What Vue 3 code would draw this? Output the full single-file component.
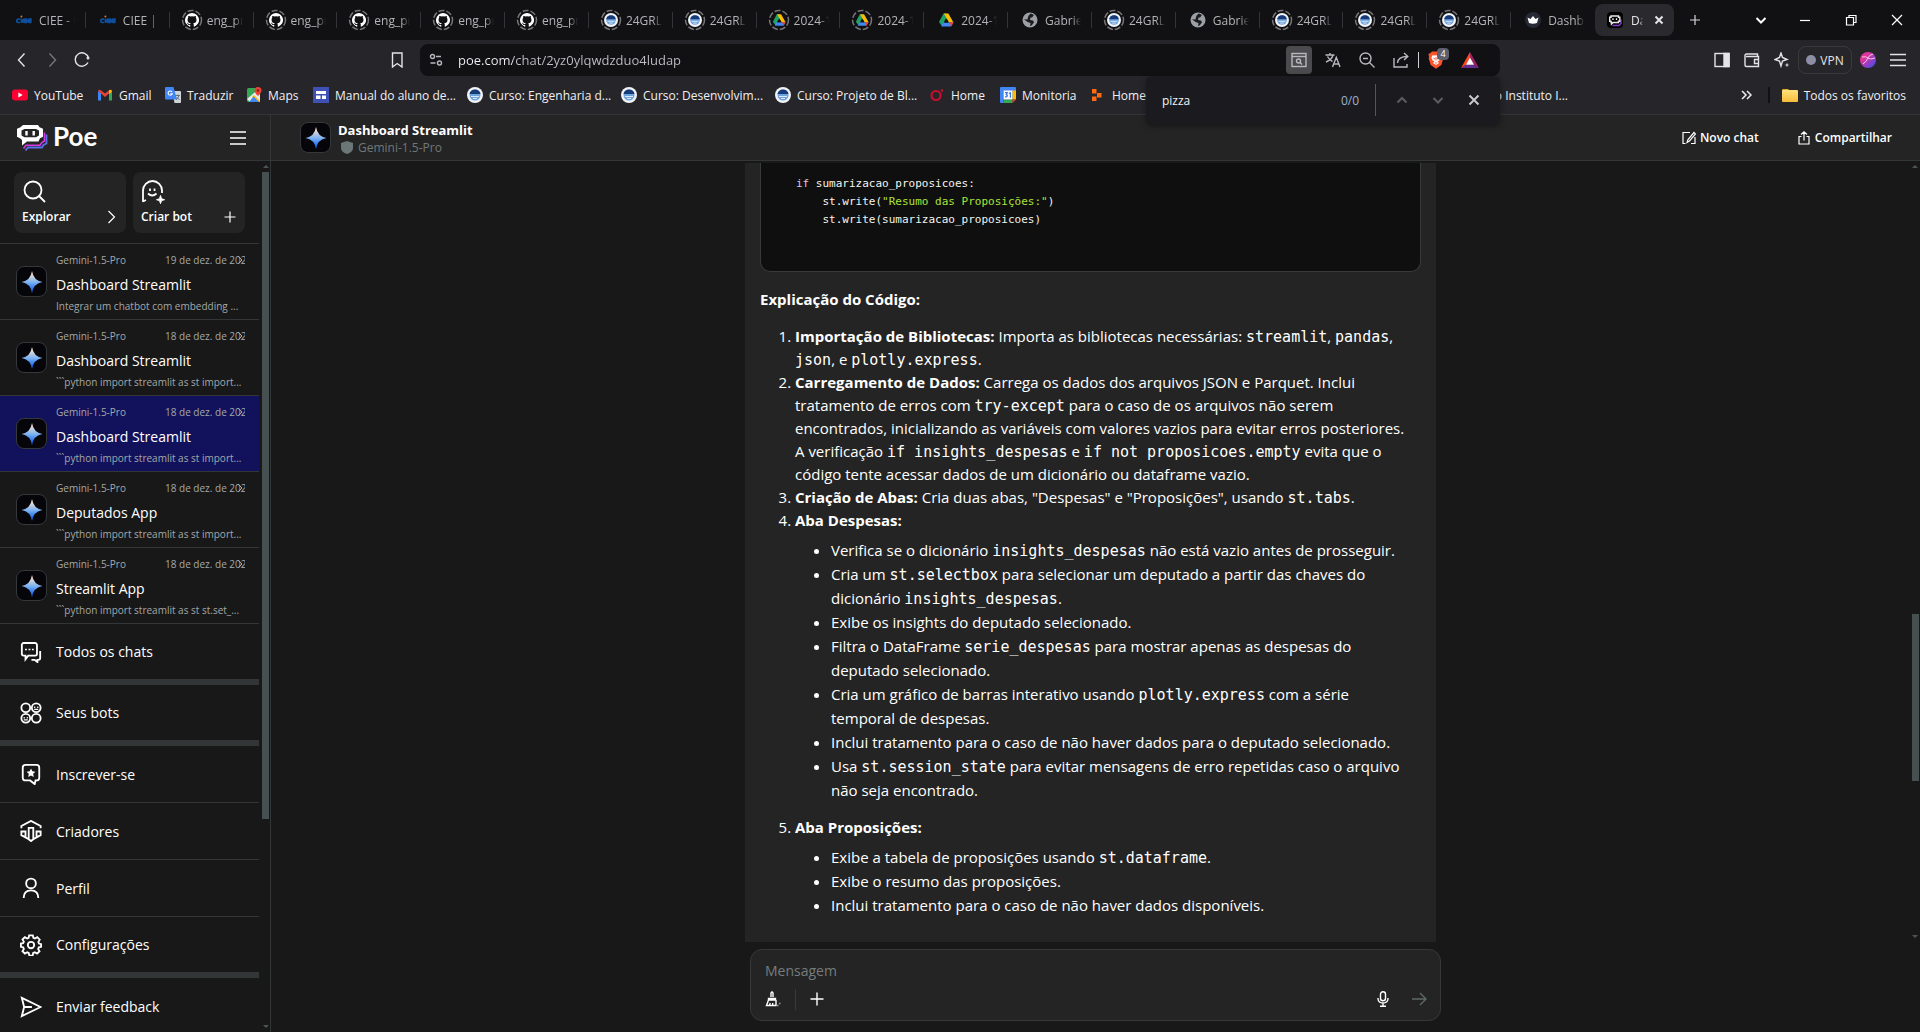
<script setup>
const tabs = [
  { icon: 'ciee', label: 'CIEE - Candidato' },
  { icon: 'ciee', label: 'CIEE | Centro' },
  { icon: 'github', label: 'eng_prompt', ring: true },
  { icon: 'github', label: 'eng_prompt', ring: true },
  { icon: 'github', label: 'eng_prompt', ring: true },
  { icon: 'github', label: 'eng_prompt', ring: true },
  { icon: 'github', label: 'eng_prompt', ring: true },
  { icon: 'infnet', label: '24GRLOED', ring: true },
  { icon: 'infnet', label: '24GRLOED', ring: true },
  { icon: 'drive', label: '2024-12-1', ring: true },
  { icon: 'drive', label: '2024-12-1', ring: true },
  { icon: 'drive', label: '2024-12-1' },
  { icon: 'globe', label: 'Gabriel Sil' },
  { icon: 'infnet', label: '24GRLOED', ring: true },
  { icon: 'globe', label: 'Gabriel Sil' },
  { icon: 'infnet', label: '24GRLOED', ring: true },
  { icon: 'infnet', label: '24GRLOED', ring: true },
  { icon: 'infnet', label: '24GRLOED', ring: true },
  { icon: 'crown', label: 'Dashboard' },
]

const bookmarks = [
  { icon: 'youtube', label: 'YouTube', width: 85 },
  { icon: 'gmail', label: 'Gmail', width: 68 },
  { icon: 'gtranslate', label: 'Traduzir', width: 81 },
  { icon: 'maps', label: 'Maps', width: 67 },
  { icon: 'sites', label: 'Manual do aluno de...', width: 154 },
  { icon: 'infnet', label: 'Curso: Engenharia d...', width: 154 },
  { icon: 'infnet', label: 'Curso: Desenvolvim...', width: 154 },
  { icon: 'infnet', label: 'Curso: Projeto de Bl...', width: 154 },
  { icon: 'ring', label: 'Home', width: 71 },
  { icon: 'calendar', label: 'Monitoria', width: 90 },
  { icon: 'blocks', label: 'Home', width: 72 },
]

const chats = [
  { date: '19 de dez. de 2024', title: 'Dashboard Streamlit', preview: 'Integrar um chatbot com embedding ...' },
  { date: '18 de dez. de 2024', title: 'Dashboard Streamlit', preview: '```python import streamlit as st import...' },
  { date: '18 de dez. de 2024', title: 'Dashboard Streamlit', preview: '```python import streamlit as st import...', active: true },
  { date: '18 de dez. de 2024', title: 'Deputados App', preview: '```python import streamlit as st import...' },
  { date: '18 de dez. de 2024', title: 'Streamlit App', preview: '```python import streamlit as st st.set_...' },
]

const menu = [
  { icon: 'chats', label: 'Todos os chats', thick: true },
  { icon: 'bots', label: 'Seus bots', thick: true },
  { icon: 'subscribe', label: 'Inscrever-se' },
  { icon: 'creators', label: 'Criadores' },
  { icon: 'profile', label: 'Perfil' },
  { icon: 'gear', label: 'Configurações', thick: true },
  { icon: 'send', label: 'Enviar feedback', last: true },
]
</script>

<template>
  <div class="screen">
    <svg class="sprites" aria-hidden="true">
      <defs>
        <linearGradient id="gem" x1="0" y1="0" x2="0" y2="1">
          <stop offset="0.1" stop-color="#ffe0cf" />
          <stop offset="0.5" stop-color="#7fb4f2" />
          <stop offset="0.85" stop-color="#1b6cf0" />
        </linearGradient>
        <linearGradient id="orb" x1="0" y1="0" x2="1" y2="1">
          <stop offset="0.3" stop-color="#e0359c" />
          <stop offset="0.9" stop-color="#4a4ae8" />
        </linearGradient>
        <linearGradient id="fold" x1="0" y1="0" x2="0" y2="1">
          <stop offset="0" stop-color="#ffe07a" />
          <stop offset="1" stop-color="#f7bc3a" />
        </linearGradient>
        <symbol id="i-ciee" viewBox="0 0 16 16">
          <g fill="none" stroke="#0d4f9e" stroke-width="1.7">
            <path d="M4 7.200H2.400a1.600 1.600 0 0 0 0 3.300H4M5.400 6.500v4.500M11 10.500H8.500a1.500 1.500 0 0 1 0-3.300h1.600v1.600H7.500M15.500 10.500h-2.200a1.500 1.500 0 0 1 0-3.300h1.600v1.600h-2.500" />
          </g>
          <circle cx="5.400" cy="4.600" r="1" fill="#e0722a" />
        </symbol>
        <symbol id="i-github" viewBox="0 0 16 16">
          <path fill="#fff" d="M8 0a8 8 0 0 0-2.530 15.590c.4.070.55-.17.55-.38v-1.490c-2.010.37-2.530-.49-2.690-.94-.09-.23-.48-.94-.82-1.130-.28-.15-.68-.52-.01-.53.63-.01 1.080.58 1.230.82.72 1.210 1.870.87 2.330.66.07-.52.28-.87.51-1.070-1.780-.2-3.640-.89-3.640-3.950 0-.87.31-1.590.82-2.150-.08-.2-.36-1.020.08-2.120 0 0 .67-.21 2.200.82a7.400 7.400 0 0 1 4 0c1.530-1.040 2.200-.82 2.200-.82.44 1.100.16 1.920.08 2.120.51.56.82 1.270.82 2.150 0 3.070-1.870 3.750-3.650 3.950.29.25.54.73.54 1.480v2.200c0 .21.15.46.55.38A8 8 0 0 0 8 0z" />
        </symbol>
        <symbol id="i-infnet" viewBox="0 0 16 16">
          <circle cx="8" cy="8" r="8" fill="#f1f3f6" />
          <circle cx="8" cy="8" r="5.500" fill="#6fa3dc" />
          <path fill="#173a78" d="M2.500 7a5.600 5.600 0 0 1 11 0z" />
          <path stroke="#dfeaf6" d="M4 9.500h8M6 11.500h4" fill="none" />
        </symbol>
        <symbol id="i-drive" viewBox="0 0 16 16">
          <path fill="#1ea362" d="M5.500 1.500h2.700L10 4.800 4.200 14.500 1 10z" />
          <path fill="#fbbc04" d="M5.800 1.500h4.600L15.500 10.500H11z" />
          <path fill="#4285f4" d="M4.800 10.500h10.700L13 14.500H3.500z" />
          <path fill="#ea4335" d="M11.500 10.500h4L13 14.500z" />
          <path fill="#111113" d="M8 6.200l2.300 4.300H5.700z" />
        </symbol>
        <symbol id="i-globe" viewBox="0 0 16 16">
          <circle cx="8" cy="8" r="7.500" fill="#9aa0a6" />
          <path fill="#1c1c1f" d="M7 3l2-1.500 3 1.500-2 2.500H8.500L8 8l3 .5 1 2-2.500 3L8 14l.5-3L5.500 10 2 7.200l3.500.3L6 5z" />
        </symbol>
        <symbol id="i-crown" viewBox="0 0 16 16">
          <circle cx="8" cy="8" r="8" fill="#272935" />
          <path fill="#fff" d="M2.500 5.500l3 1.500L8 4l2.500 3 3-1.500-1.500 5.500q-4 1.500-8 0z" />
        </symbol>
        <symbol id="i-poetab" viewBox="0 0 16 16">
          <rect width="16" height="16" rx="4" fill="#000" />
          <path fill="none" stroke="#8a3ad6" stroke-width="1.300" d="M5.500 13.500H12l2-2V7.500" />
          <path fill="none" stroke="#e8e8e8" stroke-width="1.400" d="M4 4h7.500v1.200h1.300v4h-1.300v1.300H6L4.500 12v-1.500H4V9.200H2.700v-4H4z" />
          <path stroke="#fff" stroke-width="1.300" d="M6 6.200v1.800M9.500 6.200v1.800" />
        </symbol>
        <symbol id="i-youtube" viewBox="0 0 16 16">
          <rect y="2.500" width="16" height="11" rx="3" fill="#f03" />
          <path fill="#fff" d="M6.300 5.500v5L10.700 8z" />
        </symbol>
        <symbol id="i-gmail" viewBox="0 0 16 16">
          <path fill="#4285f4" d="M1 4v9.500h3V6z" />
          <path fill="#34a853" d="M15 4v9.500h-3V6z" />
          <path fill="#ea4335" d="M1 3.800q1-1.800 2.800-.6L8 6.500l4.200-3.300Q14 2 15 3.800L8 10z" />
          <path fill="#fbbc04" d="M12 3.400l.6-.4q2-.6 2.400 1.400L12 7.300z" />
        </symbol>
        <symbol id="i-gtranslate" viewBox="0 0 16 16">
          <path fill="#cfd4da" d="M7 4h8q1 0 1 1v10q0 1-1 1H9.500z" />
          <path fill="#4285f4" d="M1 0h7.500L12 12.500H1q-1 0-1-1V1q0-1 1-1z" />
          <path fill="none" stroke="#fff" stroke-width="1.100" d="M7 5a2.100 2.100 0 1 0 .2 1.800H5.400" />
          <path fill="none" stroke="#66717c" d="M10.500 8.500h4.500M12.800 7.500v1M14 8.500q-.5 2.500-3 4.500M11.500 10l3 3" />
        </symbol>
        <symbol id="i-maps" viewBox="0 0 16 16">
          <rect x="1" y="1" width="13" height="14" rx="1.500" fill="#34a853" />
          <path fill="#e8eaed" d="M1 12L11 3.500l3 3V15H4z" />
          <path fill="#fbbc04" d="M8 8l6 6v1h-3L6 10z" />
          <path fill="#4285f4" d="M7.500 9.500L13 15H3z" />
          <path fill="#ea4335" d="M12 0a3.500 3.500 0 0 1 3.500 3.500C15.500 6 12 9 12 9S8.500 6 8.500 3.500A3.500 3.500 0 0 1 12 0z" />
          <circle cx="12" cy="3.500" r="1.200" fill="#8c1a12" />
        </symbol>
        <symbol id="i-sites" viewBox="0 0 16 16">
          <rect width="16" height="16" fill="#3f51b5" />
          <path fill="#fff" d="M3 4h10v3H3zM3 8.500h4.500V12H3zM9 8.500h4V12H9z" />
        </symbol>
        <symbol id="i-ring" viewBox="0 0 16 16">
          <circle cx="7" cy="8.500" r="4.500" fill="none" stroke="#c8102e" stroke-width="2.200" />
          <circle cx="13" cy="3.500" r="1.300" fill="#c8102e" />
        </symbol>
        <symbol id="i-calendar" viewBox="0 0 16 16">
          <path fill="#4285f4" d="M1 0h14q1 0 1 1v3H3.500v12H1q-1 0-1-1V1q0-1 1-1z" />
          <path fill="#fbbc04" d="M12.500 3.500H16v9h-3.500z" />
          <path fill="#34a853" d="M3.500 12.500h9V16h-9z" />
          <path fill="#ea4335" d="M12.500 12.500H16L12.500 16z" />
          <path fill="#fff" d="M3.500 3.500h9v9h-9z" />
          <path fill="none" stroke="#3b78e7" stroke-width="1.200" d="M5 5.700h2.300L6.200 7.600q1.500.2 1.100 1.500-.6 1.300-2.300.5M9 6.500l1.400-.8v5" />
        </symbol>
        <symbol id="i-blocks" viewBox="0 0 16 16">
          <path fill="#ff6a13" d="M2 2h4.500v4.500H2zM2 9.500h4.500V14H2zM7 6h4.500v4.500H7z" />
        </symbol>
        <symbol id="i-shieldbrave" viewBox="0 0 16 18">
          <path fill="#fb542b" d="M4 .5h8L13.800 2.300l1.700.5-.5 3.200.3 1.500-2 6.500L8 17.800 2.700 14l-2-6.500L1 6 .5 2.800l1.700-.5z" />
          <path fill="#fff" d="M4.500 4.200l2 .4 1.500-.4 1.500.4 2-.4 1.200 2.500-1.400 2.800-1.800.8L11 12l-3 2-3-2 1.500-1.700-1.800-.8-1.400-2.800z" />
          <path fill="#fb542b" d="M4.800 6.500l2.200.8-.3 1.400zM11.200 6.500l-2.200.8.3 1.400zM6.500 11l1.500.8 1.500-.8L8 13zM7.500 6h1v3.500h-1z" />
        </symbol>
        <symbol id="i-bat" viewBox="0 0 18 16">
          <path fill="#ff4724" d="M9 0L0 16l5.500-3.500L9 6z" />
          <path fill="#9e1f63" d="M9 0l9 16-5.500-3.500L9 6z" />
          <path fill="#662d91" d="M0 16h18l-5.500-3.500h-7z" />
          <path fill="#fff" d="M9 5.500l4 7.200H5z" />
        </symbol>
        <symbol id="i-chats" viewBox="0 0 24 24">
          <path d="M4 2.200h12.500a2 2 0 0 1 2 2V14a2 2 0 0 1-2 2H9l-3 4v-4H4a2 2 0 0 1-2-2V4.200a2 2 0 0 1 2-2z" />
          <path d="M22 11v7.500q0 2-2 2h-1V23l-3-2.500h-3.500M6.500 8.500v1.500M10.300 8.500v1.500M14 8.500v1.500" />
        </symbol>
        <symbol id="i-bots" viewBox="0 0 24 24">
          <circle cx="6.300" cy="6.300" r="4.800" /><circle cx="17.700" cy="6.300" r="4.800" />
          <circle cx="6.300" cy="17.700" r="4.800" /><circle cx="17.700" cy="17.700" r="4.800" />
          <path stroke-width="1.300" d="M16 5v1.500M19.400 5v1.500M15.500 8h4.400M4.600 16.400v1.500M8 16.400v1.500M4.100 19.400h4.400" />
        </symbol>
        <symbol id="i-subscribe" viewBox="0 0 24 24">
          <path d="M6 2h12a3 3 0 0 1 3 3v11a3 3 0 0 1-3 3h-1l-1 4-5-4H6a3 3 0 0 1-3-3V5a3 3 0 0 1 3-3z" />
          <path fill="currentColor" stroke="none" d="M12 6l1.500 3.100 3.300.4-2.400 2.300.6 3.400-3-1.700-3 1.700.6-3.400-2.400-2.300 3.300-.4z" />
        </symbol>
        <symbol id="i-creators" viewBox="0 0 24 24">
          <path d="M1.500 9V6.500L12 1l10.500 5.500V9M1.500 12.500h4.500V19l-4.500-2.500zM18 12.500h4.500v4L18 19zM9.500 8.500h5V21L12 23l-2.500-2zM6 19l3.500 2M18 19l-3.500 2" />
        </symbol>
        <symbol id="i-profile" viewBox="0 0 24 24">
          <circle cx="12" cy="7" r="5.300" /><path d="M4 23c0-6 3-8.500 8-8.500s8 2.500 8 8.500" />
        </symbol>
        <symbol id="i-gear" viewBox="0 0 24 24">
          <circle cx="12" cy="12" r="3.500" />
          <path d="M10 1.500h4l.6 2.800 1.700.7 2.500-1.500 2.700 2.700L20 8.700l.7 1.700 2.300.6v3l-2.400.5-.8 1.800 1.500 2.500-2.700 2.700-2.400-1.500-1.800.7-.6 2.800h-3.600l-.7-2.800-1.700-.7-2.400 1.500-2.700-2.700 1.500-2.500-.8-1.800L1 14v-3.600l2.400-.3.8-1.700-1.500-2.400 2.600-2.600L7.800 5l1.600-.7z" />
        </symbol>
        <symbol id="i-send" viewBox="0 0 24 24">
          <path d="M2 2l20.500 10L2 22l2.500-10zM4.500 12H13" />
        </symbol>
      </defs>
    </svg>

    <header class="browser">
      <div class="tabstrip">
        <nav class="tabs">
          <button v-for="(t, i) in tabs" :key="i" class="tab">
            <span class="fav" :class="{ ringed: t.ring }">
              <svg v-if="t.ring" class="dash" viewBox="0 0 22 22"><circle cx="11" cy="11" r="9.500" fill="none" stroke="#77777b" stroke-width="1.500" stroke-dasharray="6 2" /></svg>
              <svg class="favicon"><use :href="'#i-' + t.icon" /></svg>
            </span>
            <span class="tablabel">{{ t.label }}</span>
          </button>
        </nav>
        <button class="tab current">
          <svg class="favicon"><use href="#i-poetab" /></svg>
          <span class="tablabel">Dashboard</span>
          <svg class="tabclose" viewBox="0 0 10 10"><path d="M1.500 1.500l7 7M8.500 1.500l-7 7" /></svg>
        </button>
        <button class="newtab" aria-label="Nova guia"><svg viewBox="0 0 12 12"><path d="M6 1v10M1 6h10" /></svg></button>
        <div class="winbtns">
          <button class="narrow" aria-label="Pesquisar guias"><svg viewBox="0 0 12 12"><path stroke-width="2" d="M1.500 4L6 8.500 10.500 4" /></svg></button>
          <button aria-label="Minimizar"><svg viewBox="0 0 12 12"><path d="M1 6.500h10" /></svg></button>
          <button aria-label="Restaurar"><svg viewBox="0 0 12 12"><path d="M1.500 3.500h7v7.500h-7zM4 3.500v-2h7V8.500H8.500" /></svg></button>
          <button aria-label="Fechar"><svg viewBox="0 0 12 12"><path d="M1 1l10 10M11 1L1 11" /></svg></button>
        </div>
      </div>

      <div class="toolbar">
        <div class="navbtns">
          <button aria-label="Voltar"><svg viewBox="0 0 16 16"><path d="M10.500 1.500L4.500 8l6 6.500" /></svg></button>
          <button aria-label="Avançar" class="dim"><svg viewBox="0 0 16 16"><path d="M5.500 1.500l6 6.500-6 6.500" /></svg></button>
          <button aria-label="Recarregar"><svg viewBox="0 0 16 16"><path d="M14 10.500A6.700 6.700 0 1 1 14.500 6" /><circle cx="14" cy="6" r="1.500" fill="#e4e4e8" stroke="none" /></svg></button>
          <button aria-label="Favoritar" class="mark"><svg viewBox="0 0 16 16"><path d="M3.500 1h9.500v14L8.200 11.500 3.500 15z" /></svg></button>
        </div>
        <div class="address">
          <svg class="site" viewBox="0 0 14 14"><circle cx="3.500" cy="3.500" r="2" /><circle cx="10.500" cy="10" r="2" /><path d="M7 3.500h5M1.500 10h5" /></svg>
          <input class="url" type="text" value="poe.com/chat/2yz0ylqwdzduo4ludap" aria-label="Endereço" />
          <button class="findicon" aria-label="Localizar"><svg viewBox="0 0 16 16"><rect x="1" y="1.500" width="14" height="13" /><path d="M1 4.500h14" /><circle cx="7.500" cy="9" r="2" /><path d="M9 10.500l2 2" /></svg></button>
          <button aria-label="Traduzir"><svg viewBox="0 0 16 16"><path d="M.5 3h9M5 1v2M8 3q-1 4.500-7 7M2.500 4.500q2 4 5 5M7.500 15l3.800-9.500L15 15M8.800 12h5.200" /></svg></button>
          <button aria-label="Zoom"><svg viewBox="0 0 16 16"><circle cx="6.500" cy="6.500" r="5.500" /><path d="M4 6.500h5M10.500 10.500l5 5" /></svg></button>
          <button aria-label="Compartilhar página"><svg viewBox="0 0 16 16"><path d="M1 6v9h13v-3M4.500 11Q5 4.500 14.500 4.500M11 1l3.800 3.500L11 8" /></svg></button>
          <i class="vline"></i>
          <button class="brave" aria-label="Brave Shields"><svg class="lion"><use href="#i-shieldbrave" /></svg><span class="badge">4</span></button>
          <button aria-label="Rewards"><svg class="bat"><use href="#i-bat" /></svg></button>
        </div>
        <div class="tools">
          <button aria-label="Painel lateral"><svg viewBox="0 0 16 16"><rect x="1" y="1.500" width="14" height="13" /><path fill="#e4e4e8" d="M10 1.500h5v13h-5z" /></svg></button>
          <button aria-label="Carteira"><svg viewBox="0 0 16 16"><path d="M13.500 4V2H2.500Q1 2 1 3.500V13q0 1.500 1.500 1.500h12V4.500H2M14.500 7.500h-4v4h4" /></svg></button>
          <button aria-label="Leo"><svg viewBox="0 0 16 16"><path d="M7 1l1.500 4.500L13 7.500 8.500 9 7 14 5.500 9 1 7.500l4.500-2z" /><path fill="#e4e4e8" d="M13 10.500l.6 1.900 1.900.6-1.900.6-.6 1.900-.6-1.900-1.900-.6 1.900-.6z" stroke="none" /></svg></button>
          <button class="vpn"><i></i>VPN</button>
          <button aria-label="Perfil"><svg viewBox="0 0 16 16" class="plain"><circle cx="8" cy="8" r="8" fill="url(#orb)" /><path fill="none" stroke="#ffc4e2" d="M2 5q4-1 6 1t7 0M3 12q4-3 5-6t5-4" /></svg></button>
          <button aria-label="Menu"><svg viewBox="0 0 16 16"><path d="M0 2.500h16M0 8h16M0 13.500h16" /></svg></button>
        </div>
      </div>

      <div class="bookmarks">
        <a v-for="(b, i) in bookmarks" :key="i" href="#" class="bm" :style="{ width: b.width + 'px' }">
          <svg><use :href="'#i-' + b.icon" /></svg><span>{{ b.label }}</span>
        </a>
        <a href="#" class="bm tail">Página do Instituto I...</a>
        <button class="more" aria-label="Mais favoritos"><svg viewBox="0 0 12 12"><path d="M2 2l4 4-4 4M7 2l4 4-4 4" /></svg></button>
        <i class="bmline"></i>
        <a href="#" class="bm"><svg viewBox="0 0 16 16"><path fill="#e5a82c" d="M0 3q0-1 1-1h5l1.500 1.500H0z" /><rect y="3" width="16" height="12" rx="1" fill="url(#fold)" /></svg><span>Todos os favoritos</span></a>
      </div>

      <form class="find" @submit.prevent>
        <input type="text" value="pizza" aria-label="Localizar na página" />
        <span>0/0</span>
        <i></i>
        <button type="button" class="off" aria-label="Anterior"><svg viewBox="0 0 12 12"><path d="M1.500 8.500L6 4l4.500 4.500" /></svg></button>
        <button type="button" class="off" aria-label="Próximo"><svg viewBox="0 0 12 12"><path d="M1.500 4L6 8.500 10.500 4" /></svg></button>
        <button type="button" aria-label="Fechar busca"><svg viewBox="0 0 12 12"><path d="M1.500 1.500l9 9M10.500 1.500l-9 9" /></svg></button>
      </form>
    </header>

    <div class="app">
      <aside class="side">
        <div class="sidehead">
          <svg class="logo" viewBox="0 0 31 26">
            <path fill="none" stroke="#5a6fe8" stroke-width="1.800" d="M8.500 25.500l2.500-3h14l1.500-2.500 3-1.500V9.500" />
            <path fill="none" stroke="#d23ae0" stroke-width="1.600" d="M6.500 23.500l2.500-3.300h14l1.800-2.700 2.700-1.500V7.500" />
            <path fill="#fff" fill-rule="evenodd" d="M6 0h15l1.500 2.200 3.500 1.500v8L23 13.300l-1.500 3.200H10L5 20.500V15L3 13.300 0 11.700v-8l3.500-1.500zM7.500 4L4.500 5.500v5l3 1.800h11.500l3-1.800v-5L19 4z" />
            <path stroke="#fff" stroke-width="2.400" d="M9.500 6v4.500M16.700 6v4.500" />
          </svg>
          <span class="brand">Poe</span>
          <button aria-label="Alternar menu"><svg viewBox="0 0 16 16"><path d="M0 2h16M0 8h16M0 14h16" /></svg></button>
        </div>
        <div class="sidebody">
          <div class="sidelist">
            <div class="cards">
              <button class="card">
                <svg class="cardicon" viewBox="0 0 24 24"><circle cx="11" cy="10" r="8.500" /><path d="M17 16l6 6" /></svg>
                <span class="cardrow">Explorar<svg viewBox="0 0 12 14"><path d="M3.500 1l6 6-6 6" /></svg></span>
              </button>
              <button class="card">
                <svg class="cardicon" viewBox="0 0 24 24"><path d="M2 22V10.500a9 9 0 0 1 19 0V13M2 21.500l3-1.500M9 8.500v2.500M13.500 8.500v2.500M7 13.500q4.200 4 8.500 0" /><path fill="currentColor" stroke-width="1" d="M19.500 15.500l1 3.300 3 .9-3 .9-1 3-1-3-3-.9 3-.9z" /></svg>
                <span class="cardrow">Criar bot<svg viewBox="0 0 12 14"><path d="M6 1.500v11M.5 7h11" /></svg></span>
              </button>
            </div>
            <a v-for="(c, i) in chats" :key="i" href="#" class="chat" :class="{ active: c.active }">
              <span class="avatar"><svg viewBox="0 0 24 24"><path fill="url(#gem)" d="M12 1q1.500 9.500 10.500 11Q13.500 13.500 12 23 10.500 13.500 1.500 12 10.500 10.500 12 1z" /></svg></span>
              <span class="chattext">
                <span class="meta"><span>Gemini-1.5-Pro</span><span class="date">{{ c.date }}<svg viewBox="0 0 8 8"><path d="M2 0l4 4-4 4" /></svg></span></span>
                <span class="ctitle">{{ c.title }}</span>
                <span class="preview">{{ c.preview }}</span>
              </span>
            </a>
            <a v-for="m in menu" :key="m.label" href="#" class="item" :class="{ thick: m.thick, last: m.last }">
              <svg><use :href="'#i-' + m.icon" /></svg>{{ m.label }}
            </a>
          </div>
          <div class="bar sidebar"><i class="up"></i><b></b><i class="down"></i></div>
        </div>
      </aside>

      <main class="main">
        <div class="mainhead">
          <span class="avatar"><svg viewBox="0 0 24 24"><path fill="url(#gem)" d="M12 1q1.500 9.500 10.500 11Q13.500 13.500 12 23 10.500 13.500 1.500 12 10.500 10.500 12 1z" /></svg></span>
          <div class="who">
            <h1>Dashboard Streamlit</h1>
            <p><svg viewBox="0 0 12 13"><path fill="#6b7677" d="M6 0l6 2v5q0 4-6 6-6-2-6-6V2z" /></svg>Gemini-1.5-Pro</p>
          </div>
          <button class="act"><svg viewBox="0 0 14 14"><path d="M8 1.500H1v11h2.500M5 11.500l1-3L12 1.500l1.500 1.500L7.500 10zM13 6v6.500H9" /></svg>Novo chat</button>
          <button class="act"><svg viewBox="0 0 14 14"><path d="M4.500 5.500H2v7.500h10V5.500H9.500M7 9.500V1M4 3.500L7 .8l3 2.700" /></svg>Compartilhar</button>
        </div>

        <div class="thread">
          <div class="scroller">
            <article class="msg">
              <pre class="code"><span class="kw">if</span> sumarizacao_proposicoes:
    st.write(<span class="str">"Resumo das Proposições:"</span>)
    st.write(sumarizacao_proposicoes)</pre>
              <p class="lead"><strong>Explicação do Código:</strong></p>
              <ol>
                <li><strong>Importação de Bibliotecas:</strong> Importa as bibliotecas necessárias: <code>streamlit</code>, <code>pandas</code>,<br /><code>json</code>, e <code>plotly.express</code>.</li>
                <li><strong>Carregamento de Dados:</strong> Carrega os dados dos arquivos JSON e Parquet. Inclui<br />tratamento de erros com <code>try-except</code> para o caso de os arquivos não serem<br />encontrados, inicializando as variáveis com valores vazios para evitar erros posteriores.<br />A verificação <code>if insights_despesas</code> e <code>if not proposicoes.empty</code> evita que o<br />código tente acessar dados de um dicionário ou dataframe vazio.</li>
                <li><strong>Criação de Abas:</strong> Cria duas abas, "Despesas" e "Proposições", usando <code>st.tabs</code>.</li>
                <li><strong>Aba Despesas:</strong>
                  <ul>
                    <li>Verifica se o dicionário <code>insights_despesas</code> não está vazio antes de prosseguir.</li>
                    <li>Cria um <code>st.selectbox</code> para selecionar um deputado a partir das chaves do<br />dicionário <code>insights_despesas</code>.</li>
                    <li>Exibe os insights do deputado selecionado.</li>
                    <li>Filtra o DataFrame <code>serie_despesas</code> para mostrar apenas as despesas do<br />deputado selecionado.</li>
                    <li>Cria um gráfico de barras interativo usando <code>plotly.express</code> com a série<br />temporal de despesas.</li>
                    <li>Inclui tratamento para o caso de não haver dados para o deputado selecionado.</li>
                    <li>Usa <code>st.session_state</code> para evitar mensagens de erro repetidas caso o arquivo<br />não seja encontrado.</li>
                  </ul>
                </li>
                <li><strong>Aba Proposições:</strong>
                  <ul>
                    <li>Exibe a tabela de proposições usando <code>st.dataframe</code>.</li>
                    <li>Exibe o resumo das proposições.</li>
                    <li>Inclui tratamento para o caso de não haver dados disponíveis.</li>
                  </ul>
                </li>
              </ol>
            </article>
          </div>
          <div class="bar page"><i class="up"></i><b></b><i class="down"></i></div>
        </div>

        <form class="composer" @submit.prevent>
          <textarea rows="1" placeholder="Mensagem" aria-label="Mensagem"></textarea>
          <div class="actions">
            <button type="button" aria-label="Limpar contexto"><svg viewBox="0 0 16 16"><path d="M6 6V2q1-2 2 0v4M3.500 9V7.500h7V9zM3.500 9L1.500 14.500h9.500V9M4.500 14.500l.7-2.500M7.700 14.500V12" /><path d="M12.500 14.500h.8M14.500 12.500h.8" /></svg></button>
            <i></i>
            <button type="button" aria-label="Anexar"><svg viewBox="0 0 16 16"><path d="M8 1.500v13M1.500 8h13" /></svg></button>
            <button type="button" class="right" aria-label="Gravar voz"><svg viewBox="0 0 16 16"><rect x="5.500" y=".8" width="5" height="9" rx="2.500" /><path d="M3 7v1q.5 4 5 4t5-4V7M8 12v3M5 15.200h6" /></svg></button>
            <button type="submit" class="go" aria-label="Enviar mensagem"><svg viewBox="0 0 16 16"><path d="M1 8h14M9 2l6 6-6 6" /></svg></button>
          </div>
        </form>
      </main>
    </div>
  </div>
</template>

<style>
html,
body {
  margin: 0;
  background: #181818;
  overflow: hidden;
}
</style>

<style scoped>
.screen {
  height: 100vh;
  display: flex;
  flex-direction: column;
  font-family: "Open Sans", "Noto Sans", sans-serif;
  color: #fff;
  background: #181818;
}
.screen * { box-sizing: border-box; }
.sprites { position: absolute; width: 0; height: 0; }
svg { flex: none; display: block; }
button {
  font: inherit;
  color: inherit;
  background: none;
  border: 0;
  padding: 0;
  display: flex;
  align-items: center;
  justify-content: center;
}
a { color: inherit; text-decoration: none; }

/* browser chrome */
.browser { position: relative; z-index: 2; flex: none; background: #26252a; font-size: 12px; border-bottom: 1px solid #343337; }
.tabstrip { display: flex; height: 40px; background: #111113; color: #b4b4b8; align-items: center; }
.tabs { flex: 1; min-width: 0; display: grid; grid-auto-flow: column; grid-auto-columns: minmax(0, 1fr); padding-left: 2px; }
.tabs .tab { height: 16px; padding: 0 10px 0 11px; border-right: 1px solid #343438; justify-content: flex-start; min-width: 0; }
.tabs .tab:last-child { border-right: 0; }
.fav { position: relative; width: 22px; height: 22px; display: flex; align-items: center; justify-content: center; flex: none; }
.favicon { width: 16px; height: 16px; }
.ringed .favicon { width: 14px; height: 14px; }
.dash { position: absolute; inset: 0; }
.tablabel { margin-left: 4px; flex: 1; min-width: 0; text-align: left; overflow: hidden; white-space: nowrap; -webkit-mask-image: linear-gradient(90deg, #000 75%, transparent); mask-image: linear-gradient(90deg, #000 75%, transparent); }
.current { width: 79px; height: 32px; border-radius: 8px; background: #2a292e; padding: 0 10px 0 12px; color: #e4e4e8; }
.current .tablabel { margin: 0 11px 0 8px; }
.tabclose { width: 10px; height: 10px; }
.tabclose path, .newtab path, .winbtns path { fill: none; stroke: currentColor; stroke-width: 1.200; }
.tabclose path, .winbtns .narrow path { stroke-width: 2; }
.newtab { width: 42px; height: 32px; color: #d8d8dc; }
.newtab svg, .winbtns svg { width: 12px; height: 12px; }
.winbtns { display: flex; color: #fff; margin-left: 28px; }
.winbtns button { width: 46px; height: 32px; }
.winbtns .narrow { width: 42px; margin-left: -4px; }

.toolbar { display: flex; height: 40px; align-items: center; color: #e4e4e8; }
.toolbar svg { width: 16px; height: 16px; }
.toolbar button > svg:not(.plain):not(.lion):not(.bat), .site { fill: none; stroke: currentColor; stroke-width: 1.400; }
.toolbar button { height: 28px; width: 30px; }
.navbtns { display: flex; width: 420px; padding: 0 8px 0 7px; }
.navbtns .dim { color: #77767c; }
.navbtns .mark { margin-left: auto; }
.address { flex: 1; height: 32px; display: flex; align-items: center; background: #111113; border-radius: 8px; padding: 0 13px 0 9px; color: #b8b8bd; }
.toolbar .site { width: 14px; height: 14px; }
.url { flex: 1; min-width: 0; margin-left: 15px; padding: 0; border: 0; outline: 0; font: 13px/20px "Open Sans", sans-serif; color: transparent; background: linear-gradient(90deg, #f2f2f6 55px, #c0c0c6 55px); -webkit-background-clip: text; background-clip: text; }
.address button { width: 34px; }
.address .findicon { width: 26px; margin-right: 4px; border-radius: 4px; background: #4b4b4e; }
.vline { width: 1px; height: 16px; background: #d0d0d4; }
.brave { position: relative; }
.toolbar .lion { width: 16px; height: 18px; }
.toolbar .bat { width: 18px; height: 16px; }
.badge { position: absolute; left: 18px; top: 2px; width: 12px; height: 12px; border-radius: 4px; background: #5d5f6e; color: #fff; font-size: 9px; line-height: 12px; text-align: center; }
.tools { width: 420px; display: flex; justify-content: flex-end; align-items: center; padding-right: 7px; }
.tools .vpn { width: 54px; margin: 0 1px; border: 1px solid #3a393e; border-radius: 8px; gap: 4px; }
.vpn i { width: 10px; height: 10px; border-radius: 50%; background: #8d8da5; }

.bookmarks { display: flex; align-items: center; height: 34px; padding: 0 14px 4px 12px; color: #f0f0f4; overflow: hidden; }
.bm { display: flex; align-items: center; gap: 6px; flex: none; white-space: nowrap; }
.bm svg { width: 16px; height: 16px; }
.tail { width: 406px; justify-content: flex-end; }
.more { margin-left: auto; width: 20px; }
.more svg { width: 12px; height: 12px; fill: none; stroke: currentColor; stroke-width: 1.500; }
.bmline { width: 2px; height: 16px; background: #111113; margin: 0 12px; }

.find { position: absolute; right: 420px; top: 76px; width: 354px; height: 48px; display: flex; align-items: center; padding: 0 8px 0 16px; background: #1b1b1f; border-radius: 6px; box-shadow: 0 2px 6px #0006; color: #9fb0d0; }
.find input { flex: 1; min-width: 0; border: 0; outline: 0; background: none; color: #f0f0f4; font: inherit; padding: 0; }
.find i { width: 1px; height: 32px; background: #55555a; margin: 0 8px 0 16px; }
.find button { width: 36px; height: 32px; color: #c8c8cd; }
.find button.off { color: #5c5c62; }
.find svg { width: 12px; height: 12px; fill: none; stroke: currentColor; stroke-width: 2; }

/* page */
.app { flex: 1; min-height: 0; display: flex; }
.side { width: 271px; flex: none; display: flex; flex-direction: column; border-right: 1px solid #333637; }
.sidehead { height: 46px; flex: none; display: flex; align-items: center; padding: 0 24px 0 17px; background: #242424; border-bottom: 1px solid #333637; }
.logo { width: 31px; height: 26px; }
.brand { font-family: Lato, "Open Sans", sans-serif; font-size: 26px; font-weight: 700; line-height: 32px; margin: 0 0 4px 5px; }
.sidehead button { margin-left: auto; }
.sidehead button svg { width: 16px; height: 16px; fill: none; stroke: currentColor; stroke-width: 1.500; }
.sidebody { flex: 1; min-height: 0; display: flex; justify-content: space-between; }
.sidelist { width: 259px; overflow: hidden; }
.cards { display: flex; gap: 7px; padding: 11px 14px 10px; border-bottom: 1px solid #333637; }
.card { flex: 1; height: 61px; padding: 8px 8px 7px; flex-direction: column; align-items: stretch; justify-content: space-between; border-radius: 8px; background: #242424; font-size: 12px; font-weight: 600; line-height: 18px; }
.card svg { fill: none; stroke: currentColor; stroke-width: 1.800; }
.cardicon { width: 24px; height: 24px; }
.cardrow { display: flex; justify-content: space-between; align-items: center; padding-right: 1px; }
.cardrow svg { width: 12px; height: 14px; stroke-width: 1.200; }
.chat { display: flex; height: 76px; padding: 0 14px 0 16px; border-bottom: 1px solid #333637; }
.chat.active { background: #12125c; }
.avatar { width: 31px; height: 31px; flex: none; border: 1px solid #34383a; border-radius: 8px; background: #06060a; display: flex; align-items: center; justify-content: center; }
.avatar svg { width: 24px; height: 24px; }
.chat .avatar { margin-top: 22px; }
.chattext { flex: 1; min-width: 0; margin-left: 9px; display: flex; flex-direction: column; padding-top: 8px; }
.meta { display: flex; font-size: 10px; line-height: 16px; color: #a3a9a9; white-space: nowrap; }
.meta > span:first-child { width: 109px; }
.date { position: relative; flex: 1; min-width: 0; overflow: hidden; }
.date svg { position: absolute; right: 1px; top: 4px; width: 8px; height: 8px; fill: none; stroke: currentColor; }
.ctitle { font-size: 14px; line-height: 20px; margin-top: 7px; white-space: nowrap; }
.preview { font-size: 10px; line-height: 16px; margin-top: 3px; color: #a3a9a9; white-space: nowrap; overflow: hidden; }
.item { display: flex; align-items: center; height: 57px; padding-left: 20px; gap: 14px; font-size: 14px; border-bottom: 1px solid #333637; }
.item.thick { height: 61px; border-bottom: 6px solid #333637; }
.item.last { border: 0; }
.item svg { width: 22px; height: 22px; fill: none; stroke: currentColor; stroke-width: 2; }

.bar { width: 9px; display: flex; flex-direction: column; align-items: center; padding: 4px 0; }
.bar i { border: 3px solid transparent; }
.bar .up { border-top: 0; border-bottom-color: #4c5555; }
.bar .down { border-bottom: 0; border-top-color: #4c5555; margin-top: auto; }
.bar b { width: 7px; background: #465050; }
.sidebar b { height: 75%; margin-top: 4px; }
.page b { height: 167px; margin-top: 446px; }

.main { flex: 1; min-width: 0; display: flex; flex-direction: column; }
.mainhead { height: 46px; flex: none; display: flex; align-items: center; padding: 0 28px 0 29px; background: #242424; border-bottom: 1px solid #333637; }
.who { margin: 0 auto 0 7px; padding-top: 2px; }
.who h1 { margin: 0; font-size: 13px; line-height: 18px; font-weight: 700; }
.who p { margin: 0; padding-left: 3px; display: flex; align-items: center; gap: 5px; font-size: 12px; line-height: 18px; color: #6f7879; }
.who svg { width: 12px; height: 13px; }
.act { gap: 4px; font-size: 12px; font-weight: 600; margin-left: 38px; }
.act svg { width: 14px; height: 14px; fill: none; stroke: currentColor; stroke-width: 1.200; }

.thread { flex: 1; min-height: 0; display: flex; }
.scroller { flex: 1; min-width: 0; display: flex; flex-direction: column; align-items: center; justify-content: flex-end; overflow: hidden; }
.msg { width: 100%; max-width: 691px; padding: 0 15px 11px; background: #242424; font-size: 15px; line-height: 23px; white-space: nowrap; }
.code { margin: 0; padding: 12px 35px 42px; border: 1px solid #383b3c; border-top: 0; border-radius: 0 0 10px 10px; background: #0f0f0f; font-family: "DejaVu Sans Mono", monospace; font-size: 11px; line-height: 18px; color: #f4f4ee; }
.kw { color: #dcc6e0; }
.str { color: #abe338; }
.lead { margin: 16px 0 14px; }
.msg ol { margin: 0; padding-left: 35px; }
.msg ul { margin: 6px 0 14px; padding-left: 36px; line-height: 24px; list-style: disc; }
.msg code { font-family: "DejaVu Sans Mono", monospace; font-size: 15px; line-height: 20px; }
.page { width: 10px; }

.composer { width: 100%; max-width: 691px; height: 72px; margin: 7px auto 11px; padding: 10px 13px 6px 14px; background: #242424; border: 1px solid #363939; border-radius: 12px; }
.composer textarea { display: block; width: 100%; height: 22px; padding: 0; border: 0; outline: 0; resize: none; background: none; color: #fff; font: 14px/22px "Open Sans", sans-serif; overflow: hidden; }
.composer textarea::placeholder { color: #747d7d; opacity: 1; }
.actions { display: flex; align-items: center; height: 34px; }
.actions i { width: 1px; height: 21px; background: #363939; margin: 0 13px 0 14px; }
.actions svg { width: 16px; height: 16px; fill: none; stroke: currentColor; stroke-width: 1.400; }
.actions .right { margin-left: auto; }
.actions .go { margin-left: 20px; color: #5d6767; }
</style>
